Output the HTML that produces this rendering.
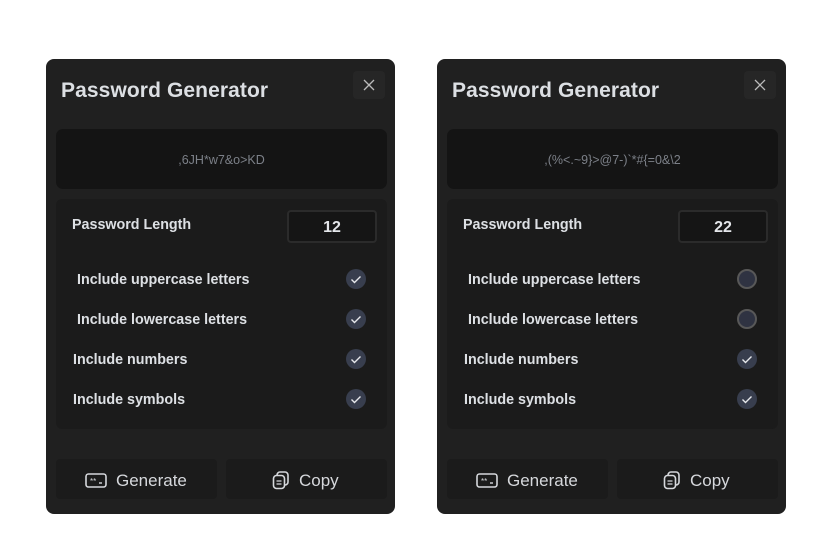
<!DOCTYPE html>
<html><head><meta charset="utf-8"><style>
*{margin:0;padding:0;box-sizing:border-box}
body{width:824px;height:550px;background:#fff;position:relative;overflow:hidden;font-family:"Liberation Sans","DejaVu Sans",sans-serif}
.p{position:absolute;top:59px;width:349px;height:455px;background:#202020;border-radius:8px}
.p>*{position:absolute}
.t{left:15px;top:20px;font-size:21px;font-weight:bold;color:#dcdfe3;letter-spacing:0.1px}
.x{left:307px;top:12px;width:32px;height:28px;background:#262626;border-radius:4px}
.pw{left:10px;top:70px;width:331px;height:60px;background:#141414;border-radius:7px;color:#7c8088;font-size:12.5px;text-align:center;line-height:62px}
.op{left:10px;top:140px;width:331px;height:230px;background:#1b1b1b;border-radius:6px}
.op>*{position:absolute}
.lbl{color:#dde0e4;font-size:14.3px;font-weight:bold}
.in{left:231px;top:11px;width:90px;height:33px;background:#151515;border:2px solid #2b2b2b;border-radius:4px;color:#e4e6ea;font-weight:bold;font-size:16px;text-align:center;line-height:31px}
.c{left:290px;width:20px;height:20px;border-radius:50%;background:#383e4e}
.u{background:#2f3342;border:2px solid #585858}
.b{top:400px;width:161px;height:40px;background:#1b1b1b;border-radius:4px;color:#d6d8dc;font-size:17px;line-height:44px}
.b svg{position:absolute}
.b span{position:absolute;top:0}
</style></head><body>
<div class="p" style="left:46px">
<div class="t">Password Generator</div>
<div class="x"><svg width="32" height="28"><path d="M11 9l10 10M21 9L11 19" stroke="#bbb" stroke-width="1.3"/></svg></div>
<div class="pw">,6JH*w7&amp;o&gt;KD</div>
<div class="op">
<div class="lbl" style="left:16px;top:18px">Password Length</div>
<div class="in">12</div>
<div class="lbl" style="left:21px;top:73px">Include uppercase letters</div>
<div class="c" style="top:70px"><svg width="20" height="20"><path d="M5.5 10.5l3 3 6-6" stroke="#e6e8ec" stroke-width="1.4" fill="none"/></svg></div>
<div class="lbl" style="left:21px;top:113px">Include lowercase letters</div>
<div class="c" style="top:110px"><svg width="20" height="20"><path d="M5.5 10.5l3 3 6-6" stroke="#e6e8ec" stroke-width="1.4" fill="none"/></svg></div>
<div class="lbl" style="left:17px;top:153px">Include numbers</div>
<div class="c" style="top:150px"><svg width="20" height="20"><path d="M5.5 10.5l3 3 6-6" stroke="#e6e8ec" stroke-width="1.4" fill="none"/></svg></div>
<div class="lbl" style="left:17px;top:193px">Include symbols</div>
<div class="c" style="top:190px"><svg width="20" height="20"><path d="M5.5 10.5l3 3 6-6" stroke="#e6e8ec" stroke-width="1.4" fill="none"/></svg></div>
</div>
<div class="b" style="left:10px"><svg style="left:29px;top:14px" width="22" height="15"><rect x="1" y="1" width="20" height="13" rx="2.5" fill="none" stroke="#d6d8dc" stroke-width="1.6"/><text x="5" y="11" font-size="8" fill="#d6d8dc" font-family="Liberation Sans">**</text><path d="M14 10h3" stroke="#d6d8dc" stroke-width="1.4"/></svg><span style="left:60px">Generate</span></div>
<div class="b" style="left:180px"><svg style="left:46px;top:12px" width="18" height="19"><rect x="5" y="1" width="11" height="13" rx="3" fill="none" stroke="#d6d8dc" stroke-width="1.6"/><rect x="1.5" y="4.5" width="11" height="13" rx="3" fill="#1b1b1b" stroke="#d6d8dc" stroke-width="1.6"/><path d="M4.5 10h5M4.5 13h5" stroke="#d6d8dc" stroke-width="1.3"/></svg><span style="left:73px">Copy</span></div>
</div>

<div class="p" style="left:437px">
<div class="t">Password Generator</div>
<div class="x"><svg width="32" height="28"><path d="M11 9l10 10M21 9L11 19" stroke="#bbb" stroke-width="1.3"/></svg></div>
<div class="pw">,(%&lt;.~9}&gt;@7-)`*#{=0&amp;\2</div>
<div class="op">
<div class="lbl" style="left:16px;top:18px">Password Length</div>
<div class="in">22</div>
<div class="lbl" style="left:21px;top:73px">Include uppercase letters</div>
<div class="c u" style="top:70px"></div>
<div class="lbl" style="left:21px;top:113px">Include lowercase letters</div>
<div class="c u" style="top:110px"></div>
<div class="lbl" style="left:17px;top:153px">Include numbers</div>
<div class="c" style="top:150px"><svg width="20" height="20"><path d="M5.5 10.5l3 3 6-6" stroke="#e6e8ec" stroke-width="1.4" fill="none"/></svg></div>
<div class="lbl" style="left:17px;top:193px">Include symbols</div>
<div class="c" style="top:190px"><svg width="20" height="20"><path d="M5.5 10.5l3 3 6-6" stroke="#e6e8ec" stroke-width="1.4" fill="none"/></svg></div>
</div>
<div class="b" style="left:10px"><svg style="left:29px;top:14px" width="22" height="15"><rect x="1" y="1" width="20" height="13" rx="2.5" fill="none" stroke="#d6d8dc" stroke-width="1.6"/><text x="5" y="11" font-size="8" fill="#d6d8dc" font-family="Liberation Sans">**</text><path d="M14 10h3" stroke="#d6d8dc" stroke-width="1.4"/></svg><span style="left:60px">Generate</span></div>
<div class="b" style="left:180px"><svg style="left:46px;top:12px" width="18" height="19"><rect x="5" y="1" width="11" height="13" rx="3" fill="none" stroke="#d6d8dc" stroke-width="1.6"/><rect x="1.5" y="4.5" width="11" height="13" rx="3" fill="#1b1b1b" stroke="#d6d8dc" stroke-width="1.6"/><path d="M4.5 10h5M4.5 13h5" stroke="#d6d8dc" stroke-width="1.3"/></svg><span style="left:73px">Copy</span></div>
</div>
</body></html>
